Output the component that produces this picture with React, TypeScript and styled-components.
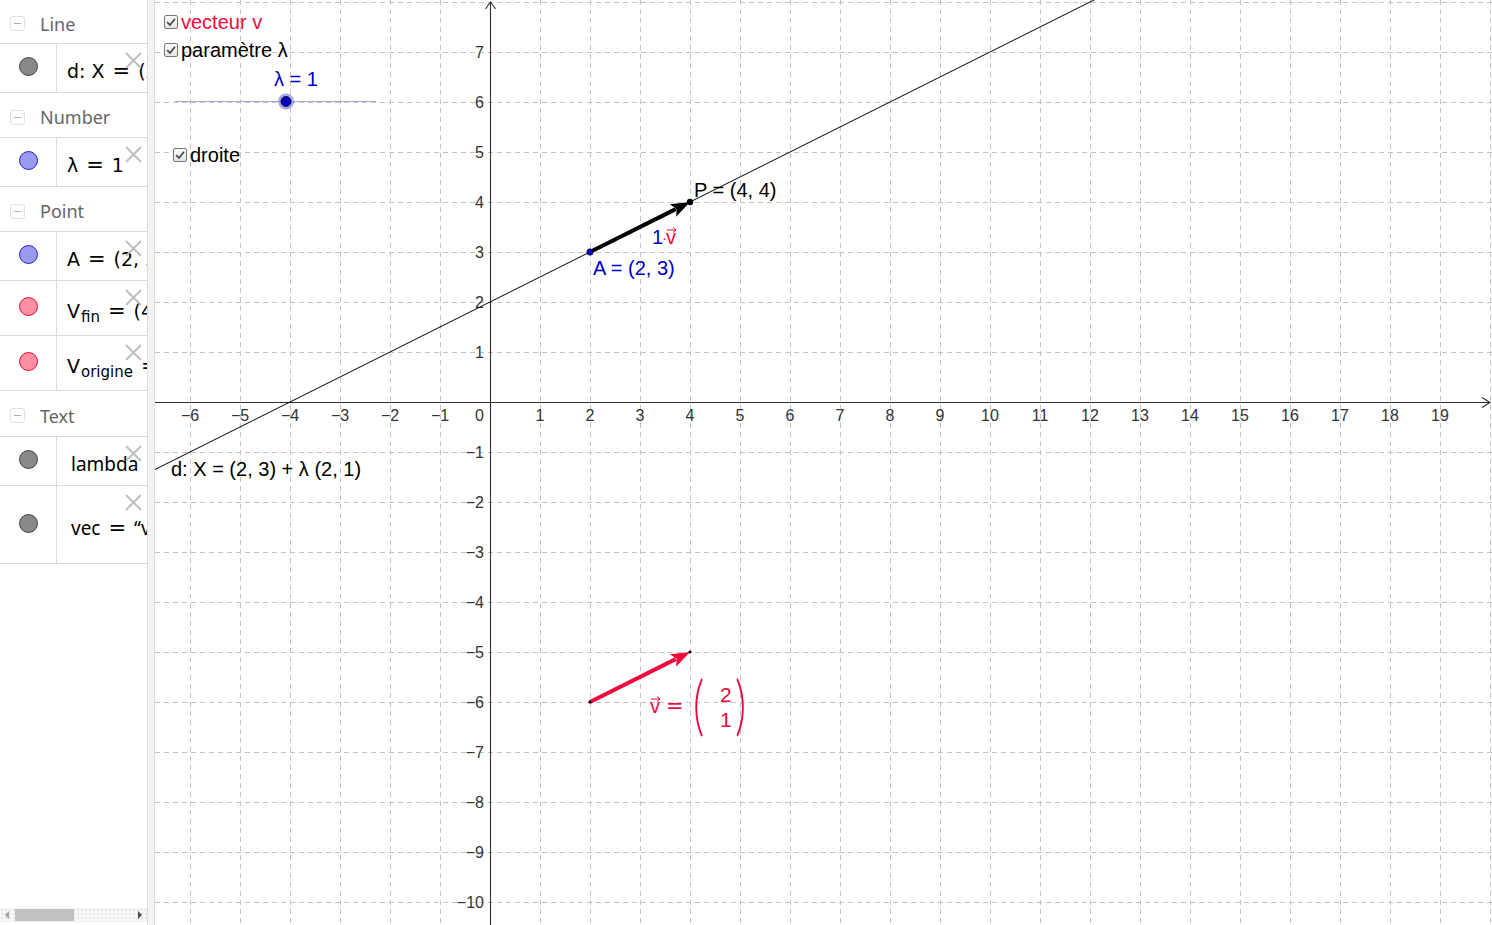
import { FC, ReactNode } from 'react';
import styled, { createGlobalStyle } from 'styled-components';

const RED = '#ee0a3c';
const BLUE = '#0000cc';
const UNIT = 50;
const OX = 490;
const OY = 402;

const px = (x: number) => OX + UNIT * x;
const py = (y: number) => OY - UNIT * y;

const GlobalStyle = createGlobalStyle`
  html, body {
    margin: 0;
    padding: 0;
    overflow: hidden;
    background: #fff;
  }
  body {
    font-family: 'Liberation Sans', Arial, sans-serif;
  }
`;

const Layout = styled.div`
  display: flex;
  width: 100vw;
  height: 100vh;
`;

const AlgebraPanel = styled.aside`
  width: 147px;
  flex: none;
  display: flex;
  flex-direction: column;
  border-right: 1px solid #dcdcdc;
  background: #fff;
  overflow: hidden;
`;

const AlgebraList = styled.div`
  flex: 1;
  overflow: hidden;
`;

const Splitter = styled.div`
  width: 6px;
  flex: none;
  background: #f4f4f4;
  border-right: 1px solid #dcdcdc;
`;

const GraphicsView = styled.main`
  flex: 1;
  position: relative;
  overflow: hidden;
  background: #fff;
`;

const Canvas = styled.svg`
  display: block;
  font-family: 'Liberation Sans', Arial, sans-serif;
`;

const GroupHeader = styled.div<{ $h: number }>`
  height: ${(p) => p.$h}px;
  box-sizing: border-box;
  border-bottom: 1px solid #dcdcdc;
  display: flex;
  align-items: center;
  gap: 15px;
  padding: 4px 0 0 10px;
  font-family: 'Noto Sans', 'Open Sans', sans-serif;
  font-size: 18px;
  color: #666;
`;

const Collapse = styled.span`
  width: 15px;
  height: 15px;
  box-sizing: border-box;
  border: 1px solid #e2e2e2;
  border-radius: 3px;
  display: flex;
  align-items: center;
  justify-content: center;

  &::before {
    content: '';
    width: 7px;
    height: 1px;
    background: #b0b0b0;
  }
`;

const Item = styled.div<{ $h: number }>`
  position: relative;
  display: flex;
  height: ${(p) => p.$h}px;
  box-sizing: border-box;
  border-bottom: 1px solid #dcdcdc;
`;

const Marble = styled.div`
  width: 57px;
  flex: none;
  box-sizing: border-box;
  border-right: 1px solid #dcdcdc;
  display: flex;
  align-items: center;
  justify-content: center;
  padding-bottom: 3px;
`;

const Dot = styled.span<{ $fill: string; $stroke: string }>`
  width: 19px;
  height: 19px;
  box-sizing: border-box;
  border-radius: 50%;
  background: ${(p) => p.$fill};
  border: 1px solid ${(p) => p.$stroke};
`;

const Formula = styled.div<{ $text?: boolean }>`
  flex: 1;
  padding-left: ${(p) => (p.$text ? 14 : 10)}px;
  padding-top: 6px;
  display: flex;
  align-items: center;
  white-space: nowrap;
  font-family: ${(p) =>
    p.$text ? "'Noto Sans', 'Open Sans', sans-serif" : "'DejaVu Sans', 'Noto Sans', sans-serif"};
  font-size: 19px;
  color: #000;

  sub {
    font-size: 15px;
    position: relative;
    top: 6px;
    margin-left: 1px;
  }
`;

const Op = styled.span`
  font-family: 'DejaVu Sans', sans-serif;
  font-size: 21px;
  margin: 0 8px;
`;

const Close = styled.svg`
  position: absolute;
  top: 8px;
  right: 5px;
`;

const ScrollBar = styled.div`
  height: 14px;
  margin-bottom: 3px;
  display: flex;
  align-items: center;
  background-color: #f7f7f7;
  background-image: radial-gradient(#e4e4e4 0.7px, transparent 0.8px);
  background-size: 4px 4px;
`;

const ScrollArrow = styled.span<{ $dir: 'left' | 'right' }>`
  width: 0;
  height: 0;
  margin: 0 5px;
  border-top: 4px solid transparent;
  border-bottom: 4px solid transparent;
  ${(p) =>
    p.$dir === 'left'
      ? 'border-right: 4px solid #a0a0a0;'
      : 'border-left: 4px solid #505050; margin-left: auto;'}
`;

const ScrollThumb = styled.span`
  width: 59px;
  height: 12px;
  margin-left: 1px;
  background: #c1c1c1;
`;

const CheckRow = styled.label<{ $x: number; $y: number; $color?: string }>`
  position: absolute;
  left: ${(p) => p.$x}px;
  top: ${(p) => p.$y}px;
  display: flex;
  align-items: center;
  gap: 3px;
  font-size: 20px;
  line-height: 22px;
  color: ${(p) => p.$color ?? '#000'};
  white-space: nowrap;
`;

const CheckBox = styled.span`
  width: 14px;
  height: 14px;
  box-sizing: border-box;
  border: 1px solid #777;
  border-radius: 2px;
  background: linear-gradient(#fdfdfd, #e4e4e4);
  display: flex;
  align-items: center;
  justify-content: center;
`;

const CloseIcon: FC = () => (
  <Close width="17" height="17" viewBox="0 0 17 17">
    <path d="M1 1 L16 16 M16 1 L1 16" stroke="#bdbdbd" strokeWidth="1.8" />
  </Close>
);

const Check: FC<{ x: number; y: number; color?: string; children: ReactNode }> = ({
  x,
  y,
  color,
  children,
}) => (
  <CheckRow $x={x} $y={y} $color={color}>
    <CheckBox>
      <svg width="10" height="10" viewBox="0 0 10 10">
        <path d="M1.2 5.2 L4 8 L9 1.8" fill="none" stroke="#444" strokeWidth="1.7" />
      </svg>
    </CheckBox>
    {children}
  </CheckRow>
);

interface RowDef {
  h: number;
  fill: string;
  stroke: string;
  text?: boolean;
  body: ReactNode;
}

const GRAY = { fill: '#888', stroke: '#444' };
const BLUEDOT = { fill: '#9a9aee', stroke: '#2424d0' };
const REDDOT = { fill: '#ff8fa2', stroke: RED };

const groups: { title: string; h: number; rows: RowDef[] }[] = [
  {
    title: 'Line',
    h: 44,
    rows: [
      {
        h: 49,
        ...GRAY,
        body: (
          <>
            d: X<Op>=</Op>(2, 3) + λ (2, 1)
          </>
        ),
      },
    ],
  },
  {
    title: 'Number',
    h: 45,
    rows: [
      {
        h: 49,
        ...BLUEDOT,
        body: (
          <>
            λ<Op>=</Op>1
          </>
        ),
      },
    ],
  },
  {
    title: 'Point',
    h: 45,
    rows: [
      {
        h: 49,
        ...BLUEDOT,
        body: (
          <>
            A<Op>=</Op>(2, 3)
          </>
        ),
      },
      {
        h: 55,
        ...REDDOT,
        body: (
          <>
            V<sub>fin</sub>
            <Op>=</Op>(4, −5)
          </>
        ),
      },
      {
        h: 55,
        ...REDDOT,
        body: (
          <>
            V<sub>origine</sub>
            <Op>=</Op>(2, −6)
          </>
        ),
      },
    ],
  },
  {
    title: 'Text',
    h: 46,
    rows: [
      {
        h: 49,
        ...GRAY,
        text: true,
        body: (
          <>
            lambda<Op>=</Op>“λ = 1”
          </>
        ),
      },
      {
        h: 78,
        ...GRAY,
        text: true,
        body: (
          <>
            vec<Op>=</Op>“v = (2, 1)”
          </>
        ),
      },
    ],
  },
];

const xTicks = Array.from({ length: 26 }, (_, i) => i - 6);
const yTicks = Array.from({ length: 18 }, (_, i) => 7 - i).filter((v) => v >= -10);
const fmt = (n: number) => (n < 0 ? `−${-n}` : `${n}`);

// arrow from (x1,y1) to (x2,y2): shaft end and head polygon
const arrowGeom = (x1: number, y1: number, x2: number, y2: number, len = 19, half = 7) => {
  const d = Math.hypot(x2 - x1, y2 - y1);
  const ux = (x2 - x1) / d;
  const uy = (y2 - y1) / d;
  const bx = x2 - ux * len;
  const by = y2 - uy * len;
  const nx = -uy;
  const ny = ux;
  const points = `${x2},${y2} ${bx + nx * half},${by + ny * half} ${bx + ux * 4},${by + uy * 4} ${bx - nx * half},${by - ny * half}`;
  return { bx: bx + ux * 3, by: by + uy * 3, points };
};

const Vector: FC<{ from: [number, number]; to: [number, number]; color: string }> = ({
  from,
  to,
  color,
}) => {
  const g = arrowGeom(from[0], from[1], to[0], to[1]);
  return (
    <g>
      <line x1={from[0]} y1={from[1]} x2={g.bx} y2={g.by} stroke={color} strokeWidth="4" />
      <polygon points={g.points} fill={color} />
    </g>
  );
};

const VecSymbol: FC<{ x: number; y: number; color: string; size?: number }> = ({
  x,
  y,
  color,
  size = 20,
}) => (
  <g>
    <text x={x} y={y} fill={color} fontSize={size}>
      v
    </text>
    <path
      d={`M${x + 1} ${y - 14} H${x + 10} M${x + 7} ${y - 16.5} L${x + 10} ${y - 14} L${x + 7} ${y - 11.5}`}
      stroke={color}
      strokeWidth="1"
      fill="none"
    />
  </g>
);

const Graph: FC = () => {
  const lineY = (x: number) => 252 - (x - 590) * 0.5;
  return (
    <Canvas width="1337" height="925" viewBox="155 0 1337 925">
      {/* grid */}
      <g stroke="#c4c4c4" strokeWidth="1" strokeDasharray="5 4">
        {xTicks.map((k) =>
          k === 0 ? null : (
            <line key={`gx${k}`} x1={px(k) + 0.5} y1={0} x2={px(k) + 0.5} y2={925} />
          ),
        )}
        <line x1={px(20) + 0.5} y1={0} x2={px(20) + 0.5} y2={925} />
        {Array.from({ length: 19 }, (_, i) => 8 - i).map((k) =>
          k === 0 ? null : (
            <line key={`gy${k}`} x1={155} y1={py(k) + 0.5} x2={1492} y2={py(k) + 0.5} />
          ),
        )}
      </g>

      {/* axes */}
      <g stroke="#303030" strokeWidth="1.1" fill="none">
        <line x1={155} y1={OY + 0.5} x2={1490} y2={OY + 0.5} />
        <path d={`M1482 ${OY - 4.5} L1490 ${OY + 0.5} L1482 ${OY + 5.5}`} />
        <line x1={OX + 0.5} y1={2} x2={OX + 0.5} y2={925} />
        <path d={`M${OX - 4.5} 9 L${OX + 0.5} 2 L${OX + 5.5} 9`} />
      </g>

      <g fill="#333" fontSize="16">
        {xTicks.map((k) =>
          k === 0 ? null : (
            <text key={`tx${k}`} x={px(k)} y={421} textAnchor="middle">
              {fmt(k)}
            </text>
          ),
        )}
        <text x={484} y={421} textAnchor="end">
          0
        </text>
        {yTicks.map((k) =>
          k === 0 ? null : (
            <text key={`ty${k}`} x={484} y={py(k) + 6} textAnchor="end">
              {fmt(k)}
            </text>
          ),
        )}
      </g>

      {/* line d */}
      <line x1={155} y1={lineY(155)} x2={1110} y2={lineY(1110)} stroke="#000" strokeWidth="1" />
      <text x={171} y={476} fontSize="20" fill="#000">
        d: X = (2, 3) + λ (2, 1)
      </text>

      {/* slider */}
      <line x1={175} y1={101.5} x2={376} y2={101.5} stroke="#a6a6d6" strokeWidth="1" />
      <circle cx={286} cy={101.5} r={8} fill="#8c8cdc" opacity="0.75" />
      <circle cx={286} cy={101.5} r={5} fill={BLUE} stroke="#000" strokeWidth="0.8" />
      <text x={274} y={86} fontSize="20" fill={BLUE}>
        λ = 1
      </text>

      {/* vector A -> P */}
      <Vector from={[590, 252]} to={[690, 202]} color="#000" />
      <circle cx={590} cy={252} r={3.2} fill={BLUE} stroke="#000" strokeWidth="0.6" />
      <circle cx={690} cy={202} r={3.2} fill="#000" />
      <text x={694} y={197} fontSize="20" fill="#000">
        P = (4, 4)
      </text>
      <text x={593} y={275} fontSize="20" fill={BLUE}>
        A = (2, 3)
      </text>
      <text x={652} y={244} fontSize="20" fill={BLUE}>
        1
      </text>
      <text x={662} y={243} fontSize="15" fill={RED}>
        ·
      </text>
      <VecSymbol x={666} y={244} color={RED} />

      {/* vector v */}
      <Vector from={[590, 702]} to={[690, 652]} color={RED} />
      <circle cx={590} cy={702} r={1.6} fill="#000" />
      <circle cx={690} cy={652} r={1.6} fill="#000" />
      <VecSymbol x={650} y={713} color={RED} />
      <text x={666} y={713} fontSize="21" fill={RED} fontFamily="'DejaVu Sans', sans-serif">
        =
      </text>
      <g fontFamily="Lato, 'Liberation Sans', sans-serif" fontWeight="300" fontSize="24" fill={RED}>
        <text x={0} y={0} transform="translate(693 728) scale(1.8 2.75)">
          (
        </text>
        <text x={0} y={0} transform="translate(735 728) scale(1.8 2.75)">
          )
        </text>
      </g>
      <text x={720} y={702} fontSize="21" fill={RED}>
        2
      </text>
      <text x={720} y={727} fontSize="21" fill={RED}>
        1
      </text>
    </Canvas>
  );
};

const App: FC = () => (
  <>
    <GlobalStyle />
    <Layout>
      <AlgebraPanel>
        <AlgebraList>
          {groups.map((g) => (
            <div key={g.title}>
              <GroupHeader $h={g.h}>
                <Collapse />
                {g.title}
              </GroupHeader>
              {g.rows.map((r, i) => (
                <Item key={`${g.title}-${i}`} $h={r.h}>
                  <Marble>
                    <Dot $fill={r.fill} $stroke={r.stroke} />
                  </Marble>
                  <Formula $text={r.text}>{r.body}</Formula>
                  <CloseIcon />
                </Item>
              ))}
            </div>
          ))}
        </AlgebraList>
        <ScrollBar>
          <ScrollArrow $dir="left" />
          <ScrollThumb />
          <ScrollArrow $dir="right" />
        </ScrollBar>
      </AlgebraPanel>
      <Splitter />
      <GraphicsView>
        <Graph />
        <Check x={9} y={11} color={RED}>
          vecteur v
        </Check>
        <Check x={9} y={39}>
          paramètre λ
        </Check>
        <Check x={18} y={144}>
          droite
        </Check>
      </GraphicsView>
    </Layout>
  </>
);

export default App;
